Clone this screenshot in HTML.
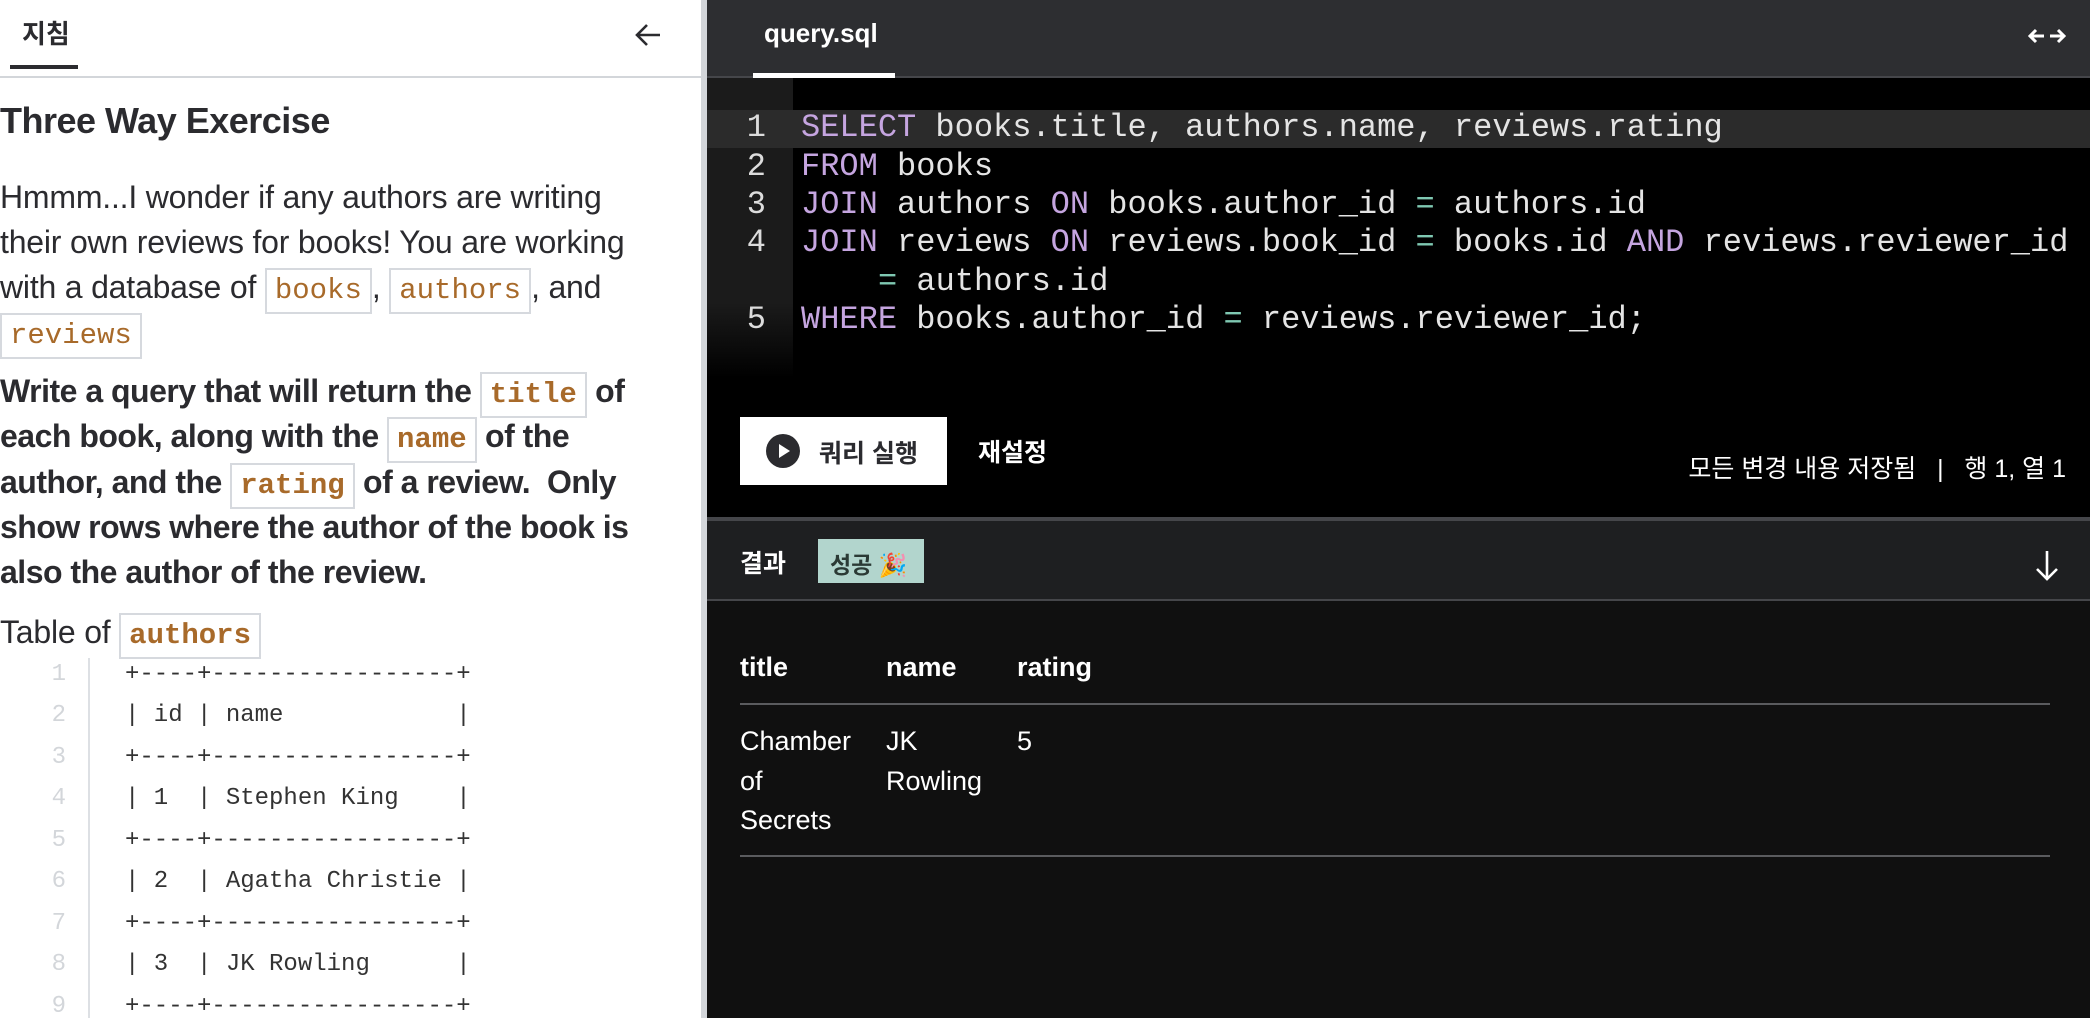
<!DOCTYPE html>
<html><head><meta charset="utf-8"><style>
*{margin:0;padding:0;box-sizing:border-box}
body{width:2090px;height:1018px;overflow:hidden;position:relative;background:#fff;font-family:"Liberation Sans","Noto Sans CJK KR",sans-serif;color:#2b2b2f}
.a{position:absolute;white-space:nowrap}
.left{position:absolute;left:0;top:0;width:701px;height:1018px;background:#fff;overflow:hidden}
.div{position:absolute;left:701px;top:0;width:6px;height:1018px;background:#d3d6da}
.p{font-size:32px;line-height:45px;letter-spacing:-0.2px}
.b{font-weight:bold;letter-spacing:-0.5px}
code{font-family:"Liberation Mono",monospace;font-size:29px;color:#a86a2a;border:2px solid #d6d9de;padding:0 8px;display:inline-block;line-height:42px;letter-spacing:0}
.tl{font-family:"Liberation Mono",monospace;font-size:24px;color:#333;white-space:pre}
.ln{font-family:"Liberation Mono",monospace;font-size:24px;color:#d3d6da;width:20px;text-align:right}
.right{position:absolute;left:707px;top:0;width:1383px;height:1018px;background:#101010}
.m{font-family:"Liberation Mono",monospace;font-size:32px;color:#e4e4e4;white-space:pre}
.k{color:#c5a5e0}.e{color:#7fc8b2}
.nm{font-family:"Liberation Mono",monospace;font-size:32px;color:#dcdcdc;width:40px;text-align:right}
.w{color:#fff}
</style></head><body>
<div class="left">
  <div class="a" style="left:22px;top:14px;font-size:26px;font-weight:bold;color:#2b2b2f">지침</div>
  <div style="position:absolute;left:10px;top:65px;width:68px;height:4px;background:#2b2b2f"></div>
  <div style="position:absolute;left:0;top:76px;width:701px;height:2px;background:#d3d6da"></div>
  <svg class="a" style="left:633px;top:20px" width="30" height="30" viewBox="0 0 30 30"><path d="M27 15H4M14 5L4 15l10 10" stroke="#2b2b2f" stroke-width="2.6" fill="none"/></svg>
  <div class="a b" style="left:0;top:100px;font-size:36px">Three Way Exercise</div>
  <div class="a p" style="left:0;top:175px">Hmmm...I wonder if any authors are writing</div>
  <div class="a p" style="left:0;top:220px">their own reviews for books! You are working</div>
  <div class="a p" style="left:0;top:265px">with a database of <code>books</code>, <code>authors</code>, and</div>
  <div class="a p" style="left:0;top:310px"><code>reviews</code></div>
  <div class="a p b" style="left:0;top:369px">Write a query that will return the <code>title</code> of</div>
  <div class="a p b" style="left:0;top:414px">each book, along with the <code>name</code> of the</div>
  <div class="a p b" style="left:0;top:460px">author, and the <code>rating</code> of a review.&nbsp; Only</div>
  <div class="a p b" style="left:0;top:505px">show rows where the author of the book is</div>
  <div class="a p b" style="left:0;top:550px">also the author of the review.</div>
  <div class="a p" style="left:0;top:610px">Table of <code style="font-weight:bold">authors</code></div>
  <div style="position:absolute;left:88px;top:658px;width:2px;height:360px;background:#dde0e4"></div>
  <div class="a ln" style="left:46px;top:661px">1</div><div class="a tl" style="left:125px;top:661px">+----+-----------------+</div>
  <div class="a ln" style="left:46px;top:702px">2</div><div class="a tl" style="left:125px;top:702px">| id | name            |</div>
  <div class="a ln" style="left:46px;top:744px">3</div><div class="a tl" style="left:125px;top:744px">+----+-----------------+</div>
  <div class="a ln" style="left:46px;top:785px">4</div><div class="a tl" style="left:125px;top:785px">| 1  | Stephen King    |</div>
  <div class="a ln" style="left:46px;top:827px">5</div><div class="a tl" style="left:125px;top:827px">+----+-----------------+</div>
  <div class="a ln" style="left:46px;top:868px">6</div><div class="a tl" style="left:125px;top:868px">| 2  | Agatha Christie |</div>
  <div class="a ln" style="left:46px;top:910px">7</div><div class="a tl" style="left:125px;top:910px">+----+-----------------+</div>
  <div class="a ln" style="left:46px;top:951px">8</div><div class="a tl" style="left:125px;top:951px">| 3  | JK Rowling      |</div>
  <div class="a ln" style="left:46px;top:993px">9</div><div class="a tl" style="left:125px;top:993px">+----+-----------------+</div>
</div>
<div class="div"></div>
<div class="right">
  <div style="position:absolute;left:0;top:0;width:1383px;height:76px;background:#2d2e31"></div>
  <div style="position:absolute;left:0;top:76px;width:1383px;height:2px;background:#45464a"></div>
  <div class="a w" style="left:57px;top:18px;font-size:26px;font-weight:bold">query.sql</div>
  <div style="position:absolute;left:46px;top:73px;width:142px;height:5px;background:#fff"></div>
  <svg class="a" style="left:1321px;top:24px" width="38" height="24" viewBox="0 0 38 24"><path d="M2 12h14M8 6L2 12l6 6M22 12h14M30 6l6 6-6 6" stroke="#fff" stroke-width="3" fill="none"/></svg>
  <div style="position:absolute;left:0;top:78px;width:1383px;height:439px;background:#000"></div>
  <div style="position:absolute;left:0;top:78px;width:86px;height:300px;background:linear-gradient(#1b1b1b 75%,#000)"></div>
  <div style="position:absolute;left:0;top:110px;width:1383px;height:38px;background:#2b2b2b"></div>
  <div class="a nm" style="left:19px;top:109px">1</div>
  <div class="a nm" style="left:19px;top:148px">2</div>
  <div class="a nm" style="left:19px;top:186px">3</div>
  <div class="a nm" style="left:19px;top:224px">4</div>
  <div class="a nm" style="left:19px;top:301px">5</div>
  <div class="a m" style="left:94px;top:109px"><span class="k">SELECT</span> books.title, authors.name, reviews.rating</div>
  <div class="a m" style="left:94px;top:148px"><span class="k">FROM</span> books</div>
  <div class="a m" style="left:94px;top:186px"><span class="k">JOIN</span> authors <span class="k">ON</span> books.author_id <span class="e">=</span> authors.id</div>
  <div class="a m" style="left:94px;top:224px"><span class="k">JOIN</span> reviews <span class="k">ON</span> reviews.book_id <span class="e">=</span> books.id <span class="k">AND</span> reviews.reviewer_id</div>
  <div class="a m" style="left:171px;top:263px"><span class="e">=</span> authors.id</div>
  <div class="a m" style="left:94px;top:301px"><span class="k">WHERE</span> books.author_id <span class="e">=</span> reviews.reviewer_id;</div>
  <div style="position:absolute;left:33px;top:417px;width:207px;height:68px;background:#fff"></div>
  <svg class="a" style="left:58px;top:433px" width="36" height="36" viewBox="0 0 36 36"><circle cx="18" cy="18" r="17" fill="#2b2b2f"/><path d="M14 11v14l11-7z" fill="#fff"/></svg>
  <div class="a" style="left:112px;top:434px;font-size:25px;font-weight:bold;color:#2b2b2f">쿼리 실행</div>
  <div class="a w" style="left:271px;top:433px;font-size:25px;font-weight:bold">재설정</div>
  <div class="a w" style="right:24px;top:449px;font-size:25px">모든 변경 내용 저장됨 &nbsp; | &nbsp; 행 1, 열 1</div>
  <div style="position:absolute;left:0;top:517px;width:1383px;height:4px;background:#45464a"></div>
  <div style="position:absolute;left:0;top:521px;width:1383px;height:78px;background:#1e1f21"></div>
  <div style="position:absolute;left:0;top:599px;width:1383px;height:2px;background:#45464a"></div>
  <div class="a w" style="left:33px;top:544px;font-size:25px;font-weight:bold">결과</div>
  <div class="a" style="left:111px;top:539px;width:106px;height:44px;background:#b2d5cd;color:#2b3a35;font-size:23px;font-weight:bold;padding:7px 0 0 12px">성공 🎉</div>
  <svg class="a" style="left:1326px;top:549px" width="28" height="34" viewBox="0 0 28 34"><path d="M14 2v28M4 20l10 10 10-10" stroke="#fff" stroke-width="2.6" fill="none"/></svg>
  <div class="a w" style="left:33px;top:652px;font-size:27px;font-weight:bold">title</div>
  <div class="a w" style="left:179px;top:652px;font-size:27px;font-weight:bold">name</div>
  <div class="a w" style="left:310px;top:652px;font-size:27px;font-weight:bold">rating</div>
  <div style="position:absolute;left:33px;top:703px;width:1310px;height:2px;background:#5a5b5e"></div>
  <div class="a w" style="left:33px;top:722px;font-size:27px;line-height:39.5px">Chamber<br>of<br>Secrets</div>
  <div class="a w" style="left:179px;top:722px;font-size:27px;line-height:39.5px">JK<br>Rowling</div>
  <div class="a w" style="left:310px;top:722px;font-size:27px;line-height:39.5px">5</div>
  <div style="position:absolute;left:33px;top:855px;width:1310px;height:2px;background:#5a5b5e"></div>
</div>
</body></html>
